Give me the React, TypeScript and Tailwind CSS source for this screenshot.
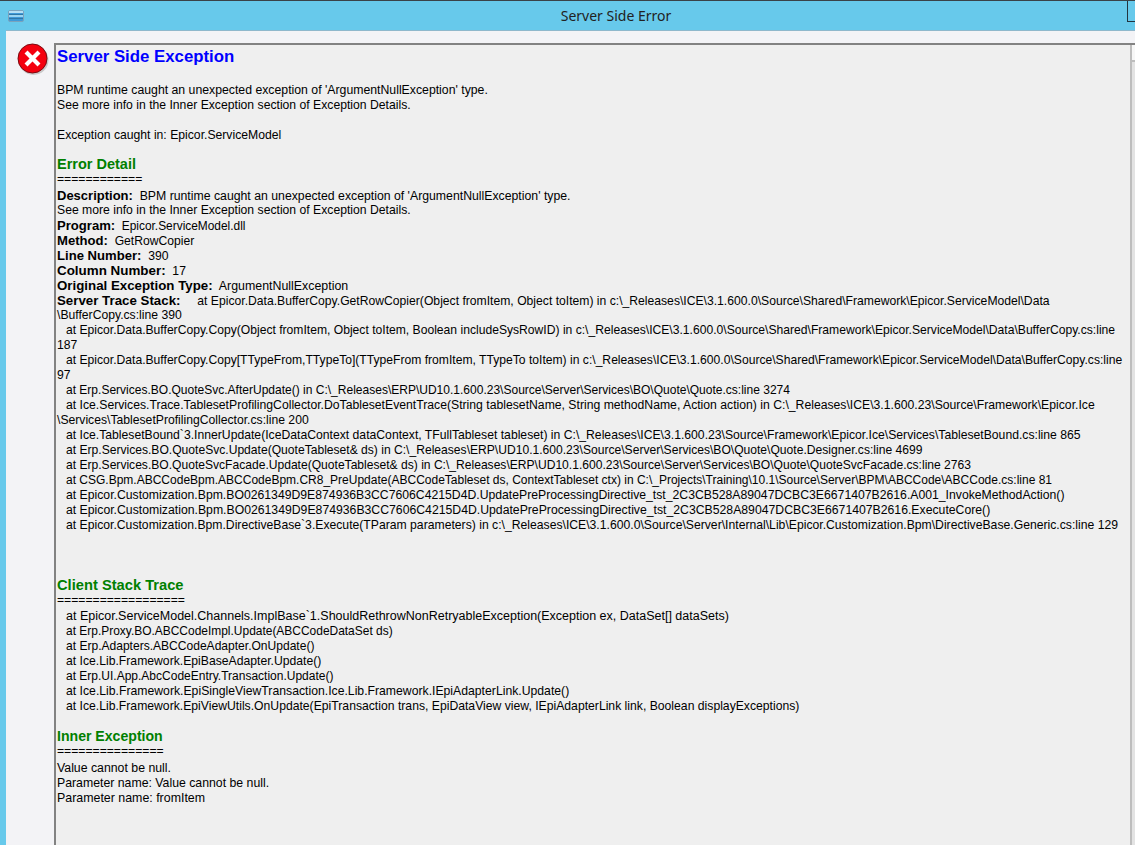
const F = "[font-family:'Liberation_Sans',Arial,sans-serif]";

function L({ children, c = "" }: { children?: React.ReactNode; c?: string }) {
  return <div className={`h-[15px] leading-[15px] whitespace-pre ${c}`}>{children}</div>;
}
function At({ s, c }: { s: string; c: string }) {
  return <L c={`pl-[9px] ${c}`}>{s}</L>;
}
function H({ children, c }: { children: React.ReactNode; c: string }) {
  return <div className={`h-[15px] leading-[15px] whitespace-pre font-bold text-[#008000] ${c}`}>{children}</div>;
}
function K({ k, v, b, c = "" }: { k: string; v: string; b: string; c?: string }) {
  return <L c={c}><b className={b}>{k}</b>{v}</L>;
}

const client: [string, string][] = [
  ["at Epicor.ServiceModel.Channels.ImplBase`1.ShouldRethrowNonRetryableException(Exception ex, DataSet[] dataSets)", "text-[12.51px]"],
  ["at Erp.Proxy.BO.ABCCodeImpl.Update(ABCCodeDataSet ds)", "text-[11.96px]"],
  ["at Erp.Adapters.ABCCodeAdapter.OnUpdate()", "text-[12.05px]"],
  ["at Ice.Lib.Framework.EpiBaseAdapter.Update()", "text-[12.19px]"],
  ["at Erp.UI.App.AbcCodeEntry.Transaction.Update()", "text-[12px]"],
  ["at Ice.Lib.Framework.EpiSingleViewTransaction.Ice.Lib.Framework.IEpiAdapterLink.Update()", "text-[12.22px]"],
  ["at Ice.Lib.Framework.EpiViewUtils.OnUpdate(EpiTransaction trans, EpiDataView view, IEpiAdapterLink link, Boolean displayExceptions)", "text-[12.2px]"],
];

export default function App() {
  return (
    <div className={`${F} w-[1135px] h-[845px] overflow-hidden bg-[#67c9eb] flex flex-col border-t border-[#3a4248] text-[#000] text-[12.18px]`}>
      <div className="h-[29px] shrink-0 flex items-center relative">
        <svg className="ml-[8px] mt-[1px]" width="16" height="12" viewBox="0 0 16 12">
          <rect x="0.5" y="0.5" width="15" height="11" rx="1.5" fill="#3f9ad8" stroke="#7ba3bd" />
          <rect x="1" y="1" width="14" height="2" fill="#b5e0f5" />
          <rect x="1" y="4" width="14" height="1" fill="#2f78a8" />
          <rect x="1" y="5" width="14" height="2" fill="#9ad5f2" />
          <rect x="1" y="8" width="14" height="1" fill="#2f78a8" />
        </svg>
        <div className="flex-1 text-center text-[14px] text-[#222] pl-[73px] font-['Noto_Sans',sans-serif]">Server Side Error</div>
        <div className="absolute right-[-4px] top-0 w-[12px] h-[21px] border border-t-0 border-[#22343f]" />
      </div>
      <div className="flex-1 min-h-0 ml-[6px] bg-[#f3f3f6] border-t border-[#8fb8cc] flex pt-[12px]">
        <div className="w-[48px] shrink-0 flex justify-end pr-[5px]">
          <svg width="32" height="32" viewBox="0 0 32 32">
            <circle cx="16.5" cy="17" r="15" fill="#8a8a8a" opacity="0.4" />
            <circle cx="15.5" cy="15.5" r="14.5" fill="#f4000f" stroke="#7a0a10" strokeWidth="1" />
            <path d="M10.5 10.5 L20.5 20.5 M20.5 10.5 L10.5 20.5" stroke="#fff" strokeWidth="4.2" strokeLinecap="square" />
          </svg>
        </div>
        <div className="flex-1 min-w-0 bg-[#efefef] border-l-2 border-t-2 border-[#828282] flex">
          <div className="flex-1 min-w-0 pl-[1px] pt-[1px] overflow-hidden">
            <div className="h-[21px] leading-[21px] text-[16.8px] font-bold text-[#0000ff]">Server Side Exception</div>
            <div className="h-[16px]" />
            <div className="-mb-[1px]">
              <L c="text-[12.28px]">BPM runtime caught an unexpected exception of 'ArgumentNullException' type.</L>
              <L c="text-[12.2px]">See more info in the Inner Exception section of Exception Details.</L>
              <L />
              <L c="text-[12.2px]">Exception caught in: Epicor.ServiceModel</L>
            </div>
            <L />
            <H c="text-[14.5px]">Error Detail</H>
            <div className="h-[16px] leading-[15px]">============</div>
            <K k="Description:" v="  BPM runtime caught an unexpected exception of 'ArgumentNullException' type." b="text-[13px]" c="text-[12.28px]" />
            <L c="text-[12.2px]">See more info in the Inner Exception section of Exception Details.</L>
            <K k="Program:" v="  Epicor.ServiceModel.dll" b="text-[13.1px]" c="text-[11.9px]" />
            <K k="Method:" v="  GetRowCopier" b="text-[13.1px]" c="text-[12.15px]" />
            <K k="Line Number:" v="  390" b="text-[13.1px]" />
            <K k="Column Number:" v="  17" b="text-[13.4px]" />
            <K k="Original Exception Type:" v="  ArgumentNullException" b="text-[13.3px]" c="text-[12.38px]" />
            <K k="Server Trace Stack:" v="     at Epicor.Data.BufferCopy.GetRowCopier(Object fromItem, Object toItem) in c:\_Releases\ICE\3.1.600.0\Source\Shared\Framework\Epicor.ServiceModel\Data" b="text-[13.3px]" c="text-[12.16px]" />
            <L>\BufferCopy.cs:line 390</L>
            <At s="at Epicor.Data.BufferCopy.Copy(Object fromItem, Object toItem, Boolean includeSysRowID) in c:\_Releases\ICE\3.1.600.0\Source\Shared\Framework\Epicor.ServiceModel\Data\BufferCopy.cs:line" c="text-[12.14px]" />
            <L>187</L>
            <At s="at Epicor.Data.BufferCopy.Copy[TTypeFrom,TTypeTo](TTypeFrom fromItem, TTypeTo toItem) in c:\_Releases\ICE\3.1.600.0\Source\Shared\Framework\Epicor.ServiceModel\Data\BufferCopy.cs:line" c="text-[12.13px]" />
            <L>97</L>
            <At s="at Erp.Services.BO.QuoteSvc.AfterUpdate() in C:\_Releases\ERP\UD10.1.600.23\Source\Server\Services\BO\Quote\Quote.cs:line 3274" c="text-[12.02px]" />
            <At s="at Ice.Services.Trace.TablesetProfilingCollector.DoTablesetEventTrace(String tablesetName, String methodName, Action action) in C:\_Releases\ICE\3.1.600.23\Source\Framework\Epicor.Ice" c="text-[12.21px]" />
            <L>\Services\TablesetProfilingCollector.cs:line 200</L>
            <At s="at Ice.TablesetBound`3.InnerUpdate(IceDataContext dataContext, TFullTableset tableset) in C:\_Releases\ICE\3.1.600.23\Source\Framework\Epicor.Ice\Services\TablesetBound.cs:line 865" c="text-[12.19px]" />
            <At s="at Erp.Services.BO.QuoteSvc.Update(QuoteTableset& ds) in C:\_Releases\ERP\UD10.1.600.23\Source\Server\Services\BO\Quote\Quote.Designer.cs:line 4699" c="text-[12.1px]" />
            <At s="at Erp.Services.BO.QuoteSvcFacade.Update(QuoteTableset& ds) in C:\_Releases\ERP\UD10.1.600.23\Source\Server\Services\BO\Quote\QuoteSvcFacade.cs:line 2763" c="text-[12.08px]" />
            <At s="at CSG.Bpm.ABCCodeBpm.ABCCodeBpm.CR8_PreUpdate(ABCCodeTableset ds, ContextTableset ctx) in C:\_Projects\Training\10.1\Source\Server\BPM\ABCCode\ABCCode.cs:line 81" c="text-[12.01px]" />
            <At s="at Epicor.Customization.Bpm.BO0261349D9E874936B3CC7606C4215D4D.UpdatePreProcessingDirective_tst_2C3CB528A89047DCBC3E6671407B2616.A001_InvokeMethodAction()" c="text-[12.22px]" />
            <At s="at Epicor.Customization.Bpm.BO0261349D9E874936B3CC7606C4215D4D.UpdatePreProcessingDirective_tst_2C3CB528A89047DCBC3E6671407B2616.ExecuteCore()" c="text-[12.24px]" />
            <At s="at Epicor.Customization.Bpm.DirectiveBase`3.Execute(TParam parameters) in c:\_Releases\ICE\3.1.600.0\Source\Server\Internal\Lib\Epicor.Customization.Bpm\DirectiveBase.Generic.cs:line 129" c="text-[12.19px]" />
            <L /><L /><L />
            <H c="text-[14.7px]">Client Stack Trace</H>
            <div className="h-[16px] leading-[15px]">==================</div>
            {client.map(([s, c], i) => <At key={i} s={s} c={c} />)}
            <L />
            <H c="text-[14.1px]">Inner Exception</H>
            <div className="h-[17px] leading-[15px]">===============</div>
            <L c="text-[12.3px]">Value cannot be null.</L>
            <L c="text-[12.29px]">Parameter name: Value cannot be null.</L>
            <L c="text-[12.4px]">Parameter name: fromItem</L>
          </div>
          <div className="w-[5px] shrink-0 flex flex-col">
            <div className="h-[17px] bg-[#f7f7f7] border-l-2 border-b-2 border-[#bdbdbd]" />
            <div className="flex-1 bg-[#e3e3e3] border-l-2 border-[#bdbdbd]" />
          </div>
        </div>
      </div>
    </div>
  );
}
